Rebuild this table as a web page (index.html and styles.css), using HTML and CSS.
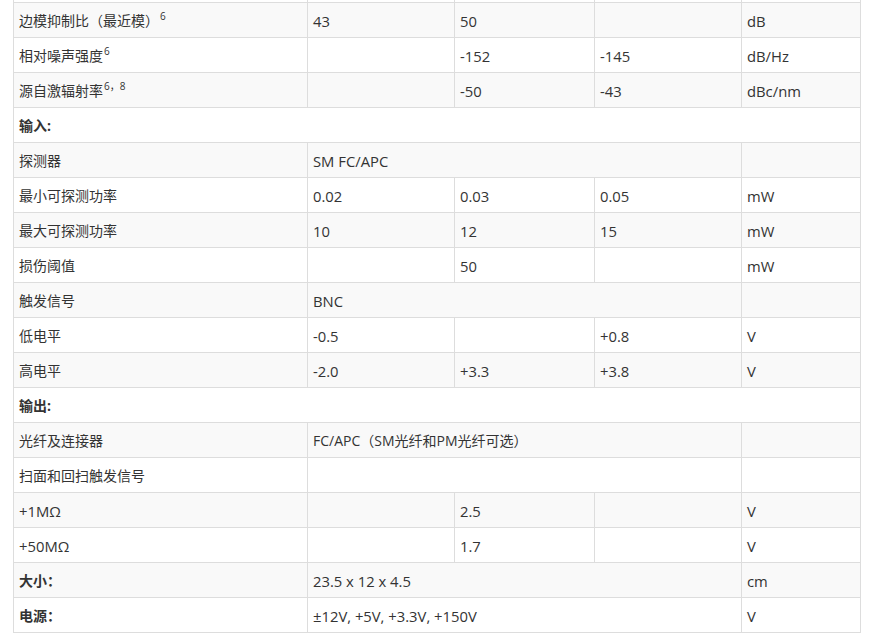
FILE: index.html
```html
<!DOCTYPE html>
<html lang="zh">
<head>
<meta charset="utf-8">
<title>参数表</title>
<link rel="stylesheet" href="styles.css">
</head>
<body>
<div class="wrap">
<table class="spec">
  <colgroup>
    <col class="c1"><col class="c2"><col class="c3"><col class="c4"><col class="c5">
  </colgroup>
  <tbody>
    <tr class="cut"><td></td><td></td><td></td><td></td><td></td></tr>
    <tr><td>边模抑制比（最近模）<sup>6</sup></td><td>43</td><td>50</td><td></td><td>dB</td></tr>
    <tr><td>相对噪声强度<sup>6</sup></td><td></td><td>-152</td><td>-145</td><td>dB/Hz</td></tr>
    <tr><td>源自激辐射率<sup>6，8</sup></td><td></td><td>-50</td><td>-43</td><td>dBc/nm</td></tr>
    <tr><td colspan="5" class="b">输入:</td></tr>
    <tr><td>探测器</td><td colspan="3">SM FC/APC</td><td></td></tr>
    <tr><td>最小可探测功率</td><td>0.02</td><td>0.03</td><td>0.05</td><td>mW</td></tr>
    <tr><td>最大可探测功率</td><td>10</td><td>12</td><td>15</td><td>mW</td></tr>
    <tr><td>损伤阈值</td><td></td><td>50</td><td></td><td>mW</td></tr>
    <tr><td>触发信号</td><td colspan="3">BNC</td><td></td></tr>
    <tr><td>低电平</td><td>-0.5</td><td></td><td>+0.8</td><td>V</td></tr>
    <tr><td>高电平</td><td>-2.0</td><td>+3.3</td><td>+3.8</td><td>V</td></tr>
    <tr><td colspan="5" class="b">输出:</td></tr>
    <tr><td>光纤及连接器</td><td colspan="3" class="m">FC/APC（SM光纤和PM光纤可选）</td><td></td></tr>
    <tr><td>扫面和回扫触发信号</td><td colspan="3"></td><td></td></tr>
    <tr><td class="n">+1MΩ</td><td></td><td>2.5</td><td></td><td>V</td></tr>
    <tr><td class="n">+50MΩ</td><td></td><td>1.7</td><td></td><td>V</td></tr>
    <tr><td class="b">大小：</td><td colspan="3">23.5 x 12 x 4.5</td><td>cm</td></tr>
    <tr><td class="b">电源：</td><td colspan="3">±12V, +5V, +3.3V, +150V</td><td>V</td></tr>
  </tbody>
</table>
</div>
</body>
</html>
```
FILE: styles.css
```css
html, body {
  margin: 0;
  padding: 0;
  background: #fff;
}
body {
  font-family: "Open Sans", "Noto Sans CJK SC", sans-serif;
  font-size: 14px;
  color: #333;
  overflow: hidden;
}
.wrap {
  padding-left: 13px;
  margin-top: -33px;
}
.spec {
  border-collapse: collapse;
  table-layout: fixed;
  width: 847px;
}
.c1 { width: 294px; }
.c2 { width: 147px; }
.c3 { width: 140px; }
.c4 { width: 147px; }
.c5 { width: 119px; }
.spec td {
  border: 1px solid #ddd;
  height: 35px;
  padding: 1px 5px 0 5px;
  box-sizing: border-box;
  line-height: 20px;
  vertical-align: middle;
  white-space: nowrap;
}
.spec td + td,
.spec td.n {
  font-size: 14.8px;
}
.spec td.m {
  font-size: 14px;
}
.spec tr:nth-child(even) td {
  background: #f9f9f9;
}
.spec sup {
  font-size: 10px;
  line-height: 0;
  vertical-align: 6px;
  margin-left: 1px;
}
.spec .b {
  font-weight: bold;
}
```
